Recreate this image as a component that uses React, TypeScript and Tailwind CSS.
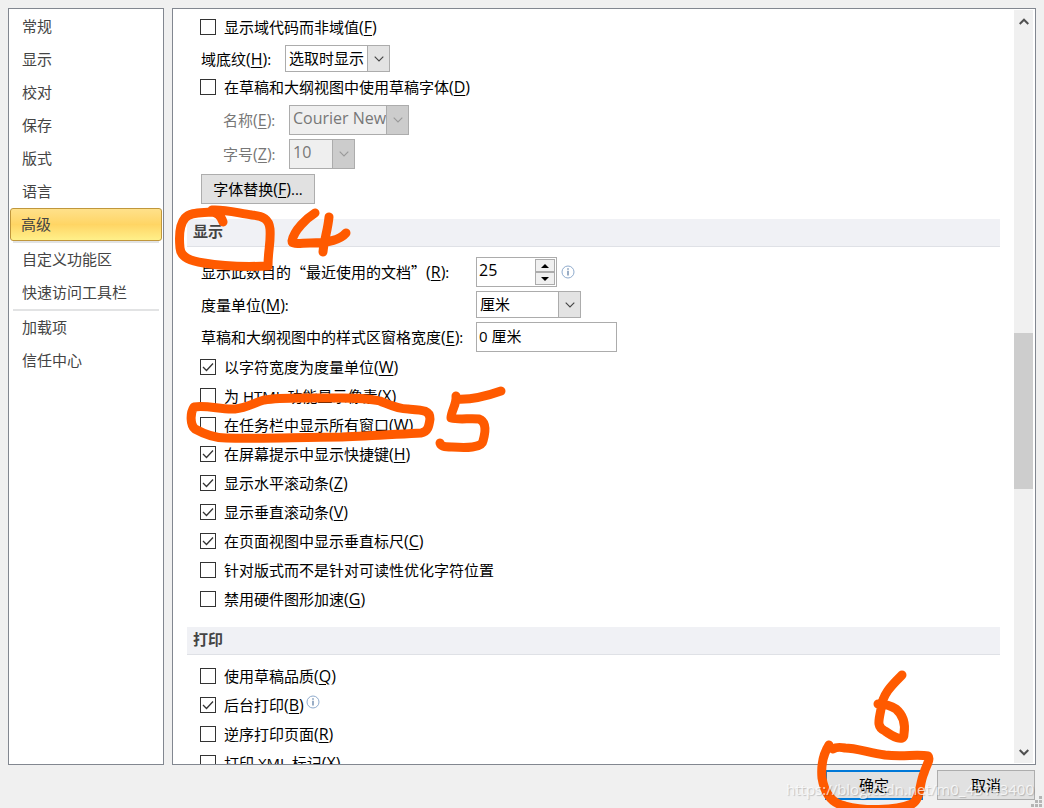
import React, { useState } from 'react';

interface OptionProps {
  text: string;
  hotkey?: string;
  checked?: boolean;
  info?: boolean;
}

interface DropDownProps {
  id: string;
  options: string[];
  className: string;
  disabled?: boolean;
}

const navGroups = [
  ['常规', '显示', '校对', '保存', '版式', '语言', '高级'],
  ['自定义功能区', '快速访问工具栏'],
  ['加载项', '信任中心'],
];

const displayOptions: OptionProps[] = [
  { text: '以字符宽度为度量单位', hotkey: 'W', checked: true },
  { text: '为 HTML 功能显示像素', hotkey: 'X' },
  { text: '在任务栏中显示所有窗口', hotkey: 'W' },
  { text: '在屏幕提示中显示快捷键', hotkey: 'H', checked: true },
  { text: '显示水平滚动条', hotkey: 'Z', checked: true },
  { text: '显示垂直滚动条', hotkey: 'V', checked: true },
  { text: '在页面视图中显示垂直标尺', hotkey: 'C', checked: true },
  { text: '针对版式而不是针对可读性优化字符位置' },
  { text: '禁用硬件图形加速', hotkey: 'G' },
];

const printOptions: OptionProps[] = [
  { text: '使用草稿品质', hotkey: 'Q' },
  { text: '后台打印', hotkey: 'B', checked: true, info: true },
  { text: '逆序打印页面', hotkey: 'R' },
  { text: '打印 XML 标记', hotkey: 'X' },
];

const Hotkey: React.FC<{ letter: string }> = ({ letter }) => (
  <span className="text-[16px]">
    (<span className="underline underline-offset-2">{letter}</span>)
  </span>
);

const InfoIcon: React.FC<{ className?: string }> = ({ className }) => (
  <svg className={className} width="14" height="14" viewBox="0 0 14 14" fill="none" aria-hidden="true">
    <circle cx="7" cy="7" r="6" stroke="#8fabcd" />
    <path d="M7 5.8V10.5" stroke="#56779f" strokeWidth="1.2" />
    <circle cx="7" cy="4" r="0.8" fill="#56779f" />
  </svg>
);

const Option: React.FC<OptionProps> = ({ text, hotkey, checked, info }) => (
  <label className="flex h-4 items-center gap-2 whitespace-nowrap leading-4">
    <span className="relative flex size-4 shrink-0">
      <input
        type="checkbox"
        defaultChecked={checked}
        className="peer size-4 appearance-none border border-[#333] bg-white"
      />
      <svg
        className="pointer-events-none absolute inset-0 hidden peer-checked:block"
        viewBox="0 0 16 16"
        fill="none"
        aria-hidden="true"
      >
        <path d="M3 8L6.5 11.5L13 4.5" stroke="#333" strokeWidth="1.3" />
      </svg>
    </span>
    <span className="flex">
      <span>
        {text}
        {hotkey && <Hotkey letter={hotkey} />}
      </span>
      {info && <InfoIcon className="ml-[2px] -mt-[2px]" />}
    </span>
  </label>
);

const DropDown: React.FC<DropDownProps> = ({ id, options, className, disabled }) => (
  <div className={`relative ${className}`}>
    <select
      id={id}
      disabled={disabled}
      className="size-full appearance-none border border-[#acacac] bg-white pb-px pl-[3px] text-black disabled:bg-[#efefef] disabled:pb-1 disabled:text-[16px] disabled:text-[#777] disabled:opacity-100"
    >
      {options.map((option) => (
        <option key={option}>{option}</option>
      ))}
    </select>
    <span
      className={`pointer-events-none absolute inset-y-0 right-0 flex w-[23px] items-center justify-center border border-[#acacac] ${
        disabled ? 'bg-[#cccccc] text-[#999]' : 'bg-[#e3e3e3] text-[#444]'
      }`}
    >
      <svg width="10" height="6" viewBox="0 0 10 6" fill="none" aria-hidden="true">
        <path d="M0.7 0.7L5 5L9.3 0.7" stroke="currentColor" strokeWidth="1.1" />
      </svg>
    </span>
  </div>
);

const SectionTitle: React.FC<{ children: React.ReactNode }> = ({ children }) => (
  <h2 className="h-7 border-b border-[#dfe1e6] bg-[#f0f1f5] pl-[6px] text-[15px] leading-[25px] font-bold text-[#444]">
    {children}
  </h2>
);

/** Hand-drawn marker strokes that number the steps on top of the dialog. */
const MarkerStrokes: React.FC = () => (
  <svg
    className="pointer-events-none absolute top-0 left-0 h-[808px] w-[1044px]"
    viewBox="0 0 1044 808"
    fill="none"
    stroke="#ff5a00"
    strokeWidth="9"
    strokeLinecap="round"
    strokeLinejoin="round"
    aria-hidden="true"
  >
    <path d="M223 222C221 216 217 212 211 212C200 213 190 212 185 218C179 225 179 238 180 248C181 258 191 261 204 263C221 266 244 267 268 266C268 250 271 243 270 229C269 219 263 216 252 215C238 213 224 209 212 210" />
    <path d="M315 213C307 218 294 230 292 241C292 245 301 243 310 243C327 243 340 240 346 233M329 217C328 229 324 240 323 252" />
    <path d="M194 407C190 413 190 425 195 429C204 434 216 438 226 438C262 439 300 437 342 437C371 436 400 434 421 433C428 432 429 426 430 419C430 410 423 410 408 409C397 409 390 405 380 401C364 397 345 398 322 398C304 398 280 397 264 400C254 403 246 408 235 409C221 410 208 405 194 407Z" />
    <path d="M501 391C487 396 472 400 456 399M456 396C457 404 451 411 451 418C459 420 470 418 479 419C487 422 485 434 483 441C482 448 466 448 452 447C444 447 441 446 440 443" />
    <path d="M902 675C893 684 882 694 881 709C879 720 876 727 885 731C892 736 904 743 904 734C906 721 902 714 896 709C890 705 882 704 878 704" />
    <path d="M829 745C822 756 821 767 822 778C824 790 830 803 845 806C863 811 895 811 912 804C921 799 919 784 924 773C926 766 931 759 928 756C918 754 902 757 885 755C867 752 855 748 845 748C840 747 836 747 833 749" />
  </svg>
);

const App: React.FC = () => {
  const [page, setPage] = useState('高级');
  const [recentCount, setRecentCount] = useState(25);

  return (
    <div className="relative flex h-screen flex-col overflow-hidden bg-[#f0f0f0] font-['Open_Sans','Noto_Sans_CJK_SC',sans-serif] text-[15px] leading-5 text-black">
      <div className="flex min-h-0 flex-1 gap-2 px-2 pt-2">
        <nav className="w-[156px] shrink-0 border border-[#828790] bg-white p-px">
          {navGroups.map((group, index) => (
            <div key={group[0]}>
              {index > 0 && <hr className="mx-[3px] h-[2px] border-0 bg-[#e2e3e4]" />}
              {group.map((name) => (
                <button
                  key={name}
                  type="button"
                  onClick={() => setPage(name)}
                  className={`block h-[33px] w-full rounded-[3px] border pb-[2px] text-left text-[#444] ${
                    page === name
                      ? 'border-[#c0973c] bg-linear-to-b from-[#ffe18a] via-[#ffd564] to-[#fff08a] pl-[10px]'
                      : 'border-transparent pl-[11px]'
                  }`}
                >
                  {name}
                </button>
              ))}
            </div>
          ))}
        </nav>

        <main className="flex min-w-0 flex-1 border border-[#828790] bg-white">
          <div className="min-w-0 flex-1 overflow-hidden pt-[10px] pr-[14px] pl-[14px]">
            <div className="pl-[13px]">
              <Option text="显示域代码而非域值" hotkey="F" />
              <div className="mt-[10px] flex items-center">
                <label htmlFor="shading" className="w-[85px] pl-px">
                  域底纹
                  <Hotkey letter="H" />:
                </label>
                <DropDown id="shading" options={['选取时显示', '不显示', '始终显示']} className="h-[27px] w-[105px]" />
              </div>
              <div className="mt-[7px]">
                <Option text="在草稿和大纲视图中使用草稿字体" hotkey="D" />
              </div>
              <div className="mt-[10px] flex items-center pl-[22px] text-[#777]">
                <label htmlFor="font-name" className="w-[67px] pl-px">
                  名称
                  <Hotkey letter="E" />:
                </label>
                <DropDown id="font-name" options={['Courier New']} className="h-[30px] w-[120px]" disabled />
              </div>
              <div className="mt-1 flex items-center pl-[22px] text-[#777]">
                <label htmlFor="font-size" className="w-[67px] pl-px">
                  字号
                  <Hotkey letter="Z" />:
                </label>
                <DropDown id="font-size" options={['10']} className="h-[30px] w-[66px]" disabled />
              </div>
              <button type="button" className="mt-[5px] ml-px block h-[30px] w-[114px] border border-[#adadad] bg-[#e1e1e1]">
                字体替换
                <Hotkey letter="F" />
                ...
              </button>
            </div>

            <div className="mt-[15px]">
              <SectionTitle>显示</SectionTitle>
            </div>
            <div className="pl-[13px]">
              <div className="mt-[10px] flex items-center">
                <label htmlFor="recent" className="w-[276px] pl-px">
                  显示此数目的<span className="font-['Noto_Sans_CJK_SC']">“最近使用的文档”</span>
                  <Hotkey letter="R" />:
                </label>
                <div className="flex h-[30px] w-[81px] border border-[#acacac] bg-white p-px">
                  <input
                    id="recent"
                    type="text"
                    value={recentCount}
                    onChange={(e) => setRecentCount(Number(e.target.value) || 0)}
                    className="min-w-0 flex-1 pb-1 pl-px text-[16px] outline-none"
                  />
                  <div className="flex w-5 flex-col">
                    <button
                      type="button"
                      aria-label="增加"
                      onClick={() => setRecentCount(recentCount + 1)}
                      className="flex flex-1 items-center justify-center border border-[#acacac] bg-[#f0f0f0]"
                    >
                      <svg width="8" height="4" viewBox="0 0 8 4" aria-hidden="true">
                        <path d="M0 4L4 0L8 4Z" />
                      </svg>
                    </button>
                    <button
                      type="button"
                      aria-label="减少"
                      onClick={() => setRecentCount(Math.max(0, recentCount - 1))}
                      className="flex flex-1 items-center justify-center border border-[#acacac] bg-[#f0f0f0]"
                    >
                      <svg width="8" height="4" viewBox="0 0 8 4" aria-hidden="true">
                        <path d="M0 0L4 4L8 0Z" />
                      </svg>
                    </button>
                  </div>
                </div>
                <InfoIcon className="ml-1" />
              </div>
              <div className="mt-1 flex items-center">
                <label htmlFor="unit" className="w-[276px] pl-px">
                  度量单位
                  <Hotkey letter="M" />:
                </label>
                <DropDown id="unit" options={['厘米', '英寸', '毫米', '磅']} className="h-[27px] w-[105px]" />
              </div>
              <div className="mt-1 flex items-center">
                <label htmlFor="pane-width" className="w-[276px] pl-px">
                  草稿和大纲视图中的样式区窗格宽度
                  <Hotkey letter="E" />:
                </label>
                <input
                  id="pane-width"
                  type="text"
                  defaultValue="0 厘米"
                  className="h-[30px] w-[141px] border border-[#acacac] pb-1 pl-[2px] outline-none"
                />
              </div>
              <div className="mt-[7px] flex flex-col gap-[13px]">
                {displayOptions.map((option) => (
                  <Option key={option.text} {...option} />
                ))}
              </div>
            </div>

            <div className="mt-5">
              <SectionTitle>打印</SectionTitle>
            </div>
            <div className="mt-[13px] flex flex-col gap-[13px] pl-[13px]">
              {printOptions.map((option) => (
                <Option key={option.text} {...option} />
              ))}
            </div>
          </div>

          {/* Scroll bar */}
          <div className="my-px mr-[2px] flex w-[19px] shrink-0 flex-col bg-[#f0f0f0] text-[#505050]">
            <button type="button" aria-label="向上滚动" className="flex h-[22px] items-center justify-center">
              <svg width="10" height="7" viewBox="0 0 10 7" fill="none" aria-hidden="true">
                <path d="M0.7 6L5 1.7L9.3 6" stroke="currentColor" strokeWidth="2" />
              </svg>
            </button>
            <div className="flex min-h-0 flex-1 flex-col">
              <div className="grow-[301]" />
              <div className="grow-[157] bg-[#cdcdcd]" />
              <div className="grow-[252]" />
            </div>
            <button type="button" aria-label="向下滚动" className="flex h-[22px] items-center justify-center">
              <svg width="10" height="7" viewBox="0 0 10 7" fill="none" aria-hidden="true">
                <path d="M0.7 1L5 5.3L9.3 1" stroke="currentColor" strokeWidth="2" />
              </svg>
            </button>
          </div>
        </main>
      </div>

      <footer className="flex shrink-0 justify-end gap-[14px] pt-[5px] pr-[9px] pb-2">
        <button type="button" className="h-[30px] w-[98px] border-2 border-[#0078d7] bg-[#e1e1e1]">
          确定
        </button>
        <button type="button" className="h-[30px] w-[98px] border border-[#adadad] bg-[#e1e1e1]">
          取消
        </button>
      </footer>

      <svg className="absolute right-[2px] bottom-[1px]" width="11" height="11" viewBox="0 0 11 11" fill="#b5b5b5" aria-hidden="true">
        <path d="M8 0h3v3h-3zM4 4h3v3h-3zM8 4h3v3h-3zM0 8h3v3h-3zM4 8h3v3h-3zM8 8h3v3h-3z" />
      </svg>

      <MarkerStrokes />
      <p className="pointer-events-none absolute right-[10px] bottom-[9px] text-white/75 [text-shadow:1px_1px_1px_rgba(0,0,0,0.2)]">
        https://blog.csdn.net/m0_45143400
      </p>
    </div>
  );
};

export default App;
